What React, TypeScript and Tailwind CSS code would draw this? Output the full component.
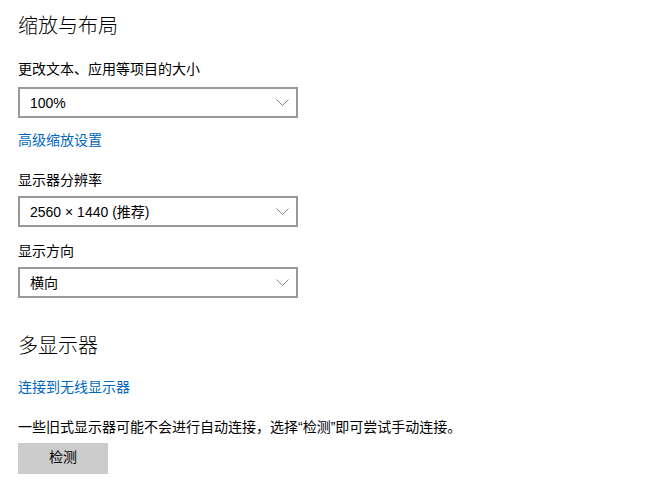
import React from "react";

const font = { fontFamily: '"Liberation Sans", "Noto Sans CJK SC", sans-serif' };

function Chevron() {
  return (
    <svg width="13" height="7" viewBox="0 0 13 7" fill="none" className="shrink-0">
      <path d="M0.5 0.5 L6.5 6.5 L12.5 0.5" stroke="#7a7a7a" strokeWidth="0.9" />
    </svg>
  );
}

function Select({ value, className = "" }: { value: string; className?: string }) {
  return (
    <div
      className={`flex items-center justify-between w-[280px] h-[31px] border-2 border-[#999999] bg-white pl-[10px] pr-[7px] text-[14px] text-black ${className}`}
    >
      <span className="leading-[20px]">{value}</span>
      <Chevron />
    </div>
  );
}

export default function App() {
  return (
    <div className="w-[666px] h-[491px] bg-white text-black pl-[18px] overflow-hidden" style={font}>
      <div className="flex flex-col items-start">
        <h1 className="mt-[12px] text-[20px] leading-[28px] font-light">缩放与布局</h1>
        <div className="mt-[19px] text-[14px] leading-[20px]">更改文本、应用等项目的大小</div>
        <Select value="100%" className="mt-[8px]" />
        <a className="mt-[12px] text-[14px] leading-[20px] text-[#0067c0] cursor-pointer">高级缩放设置</a>
        <div className="mt-[20px] text-[14px] leading-[20px]">显示器分辨率</div>
        <Select value="2560 × 1440 (推荐)" className="mt-[6px]" />
        <div className="mt-[14px] text-[14px] leading-[20px]">显示方向</div>
        <Select value="横向" className="mt-[6px]" />
        <h2 className="mt-[34px] text-[20px] leading-[28px] font-light">多显示器</h2>
        <a className="mt-[17px] text-[14px] leading-[20px] text-[#0067c0] cursor-pointer">连接到无线显示器</a>
        <div className="mt-[20px] text-[14px] leading-[20px]">一些旧式显示器可能不会进行自动连接，选择“检测”即可尝试手动连接。</div>
        <button className="mt-[6px] w-[90px] h-[31px] bg-[#cccccc] text-[14px] leading-[20px] text-black pb-[3px]">检测</button>
      </div>
    </div>
  );
}
